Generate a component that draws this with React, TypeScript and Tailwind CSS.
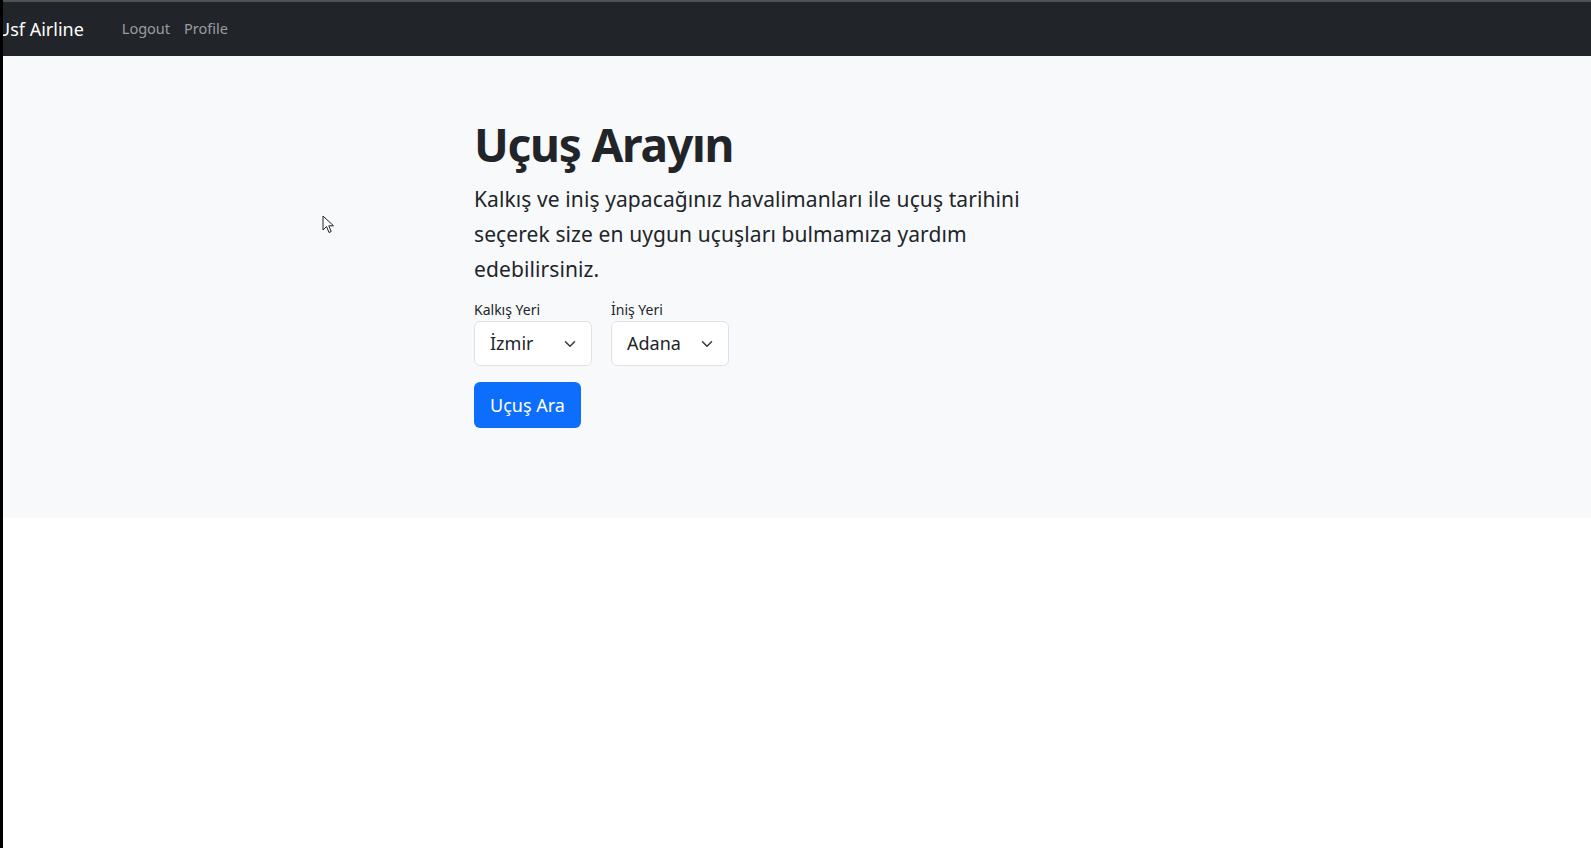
import React from "react";

function Chevron() {
  return (
    <svg width="16" height="12" viewBox="0 0 16 16" fill="none">
      <path d="m2 5 6 6 6-6" stroke="#343a40" strokeWidth="2" strokeLinecap="round" strokeLinejoin="round" />
    </svg>
  );
}

function Select({ value, width }: { value: string; width: string }) {
  return (
    <div className={`flex h-[45px] ${width} items-center justify-between rounded-[6px] border border-[#dee2e6] bg-white pl-[15px] pr-[13px] text-[18px] text-[#212529]`}>
      <span>{value}</span>
      <Chevron />
    </div>
  );
}

export default function App() {
  return (
    <div className="relative flex min-h-[848px] w-full bg-white" style={{ fontFamily: '"Noto Sans", "Open Sans", sans-serif' }}>
      <div className="w-[3px] shrink-0 bg-black" />
      <div className="flex min-w-0 flex-1 flex-col overflow-hidden">
        <div className="h-[2px] bg-[#505254]" />
        <nav className="flex h-[54px] items-center bg-[#212529]">
          <span className="ml-[-6px] text-[18px] text-white">Usf Airline</span>
          <div className="ml-[38px] flex gap-[14px] text-[14.5px] text-[#9a9da0]">
            <span>Logout</span>
            <span>Profile</span>
          </div>
        </nav>
        <section className="h-[462px] bg-[#f8f9fa] pl-[471px] pt-[61px]">
          <h1 className="text-[46px] font-bold leading-[55px] tracking-[-1.2px] text-[#212529]">Uçuş Arayın</h1>
          <p className="mt-[10px] text-[21px] leading-[35px] tracking-[0.1px] text-[#212529]">
            Kalkış ve iniş yapacağınız havalimanları ile uçuş tarihini
            <br />
            seçerek size en uygun uçuşları bulmamıza yardım
            <br />
            edebilirsiniz.
          </p>
          <div className="mt-[12px] flex gap-[19px]">
            <div className="flex flex-col">
              <label className="mb-[1px] text-[14px] leading-[21px] text-[#212529]">Kalkış Yeri</label>
              <Select value="İzmir" width="w-[118px]" />
            </div>
            <div className="flex flex-col">
              <label className="mb-[1px] text-[14px] leading-[21px] text-[#212529]">İniş Yeri</label>
              <Select value="Adana" width="w-[118px]" />
            </div>
          </div>
          <button className="mt-[16px] h-[46px] rounded-[6px] bg-[#0d6efd] px-[16px] text-[18px] text-white">
            Uçuş Ara
          </button>
        </section>
      </div>
      <svg className="absolute left-[322px] top-[215px]" width="13" height="19" viewBox="0 0 13 19">
        <path d="M1 1 L1 15 L4.5 11.5 L7 17.5 L9.2 16.6 L6.8 10.8 L11.5 10.8 Z" fill="white" stroke="#222" strokeWidth="1" strokeLinejoin="round" />
      </svg>
    </div>
  );
}
